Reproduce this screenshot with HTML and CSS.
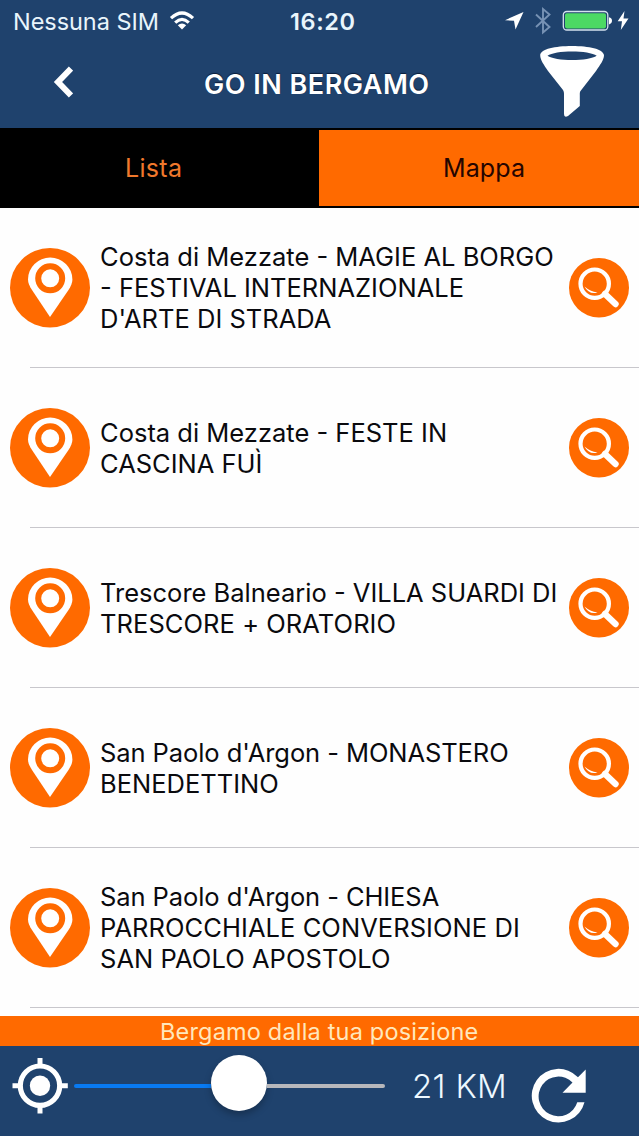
FILE: index.html
```html
<!DOCTYPE html>
<html lang="it">
<head>
<meta charset="utf-8">
<title>Go in Bergamo</title>
<link rel="stylesheet" href="styles.css">
</head>
<body>
<svg width="0" height="0" class="sprite">
  <symbol id="pin" viewBox="0 0 80 80">
    <ellipse cx="40" cy="39.7" rx="40" ry="39.7" fill="#ff6a00"/>
    <path d="M40 69L22 42C19.500 38 18 35 18 31.500A22.200 22 0 0 1 62.400 31.500C62.400 35 61 38 58.500 42Z" fill="#fff"/>
    <circle cx="40.200" cy="30.300" r="12" fill="#fff" stroke="#ff6a00" stroke-width="6"/>
  </symbol>
  <symbol id="search" viewBox="0 0 60 60">
    <ellipse cx="30" cy="29.700" rx="30" ry="29.700" fill="#ff6a00"/>
    <circle cx="25.700" cy="25.700" r="14.200" fill="none" stroke="#fff" stroke-width="4.200"/>
    <path d="M15.500 28.500Q21 33.500 28.500 34.500Q20 37 15.500 28.500Z" fill="#fff"/>
    <path d="M36 36L46.500 46" stroke="#fff" stroke-width="6.400" stroke-linecap="round"/>
  </symbol>
</svg>
<div class="screen">
  <header class="top">
    <div class="status">
      <span class="carrier">Nessuna SIM</span>
      <svg class="wifi" viewBox="0 0 26 20"><g fill="none" stroke="#fff" stroke-width="3.200"><path d="M2 7.200Q13 -3.200 24 7.200"/><path d="M6.200 11.600Q13 5.200 19.800 11.600"/></g><path d="M8.800 14.200Q13 10.800 17.200 14.200L13 18.600Z" fill="#fff"/></svg>
      <span class="clock">16:20</span>
      <svg class="indicators" viewBox="500 0 139 42">
        <path d="M505 20.200L523.500 12L515.500 29.500L514 20.800Z" fill="#fff"/>
        <path d="M536 14.500L549.500 27L543 32.500V9L549.500 14.500L536 27" fill="none" stroke="#7792b4" stroke-width="1.900"/>
        <rect x="563.300" y="11.500" width="44.500" height="18.500" rx="3.500" fill="none" stroke="#d5e2ee" stroke-width="1.300"/>
        <rect x="565" y="13.200" width="41" height="15.200" rx="1.800" fill="#4cd964"/>
        <path d="M609 17.200Q612 18 612 20.800T609 24.400Z" fill="#fff"/>
        <path d="M624.500 11L617.700 21.300H622L620.800 30L628.500 18.500H623.500Z" fill="#fff"/>
      </svg>
    </div>
    <div class="nav">
      <svg class="back" viewBox="0 0 20 32"><path d="M18 2.500L5 16L18 29.500" fill="none" stroke="#fff" stroke-width="6"/></svg>
      <h1 class="title">GO IN BERGAMO</h1>
      <svg class="filter" viewBox="540 46 64 72"><path d="M540.200 55C541 49 555 46 572 46S603 49 604 55C604 60 600 65 596 71L580.500 91C579.800 92 579.800 93 579.800 95V106L568 116Q564 118 564 114V95C564 93 564 92 563 90L548 71C544 65 540.200 60 540.200 55Z" fill="#fff"/><path d="M547.500 55.800C555 50 589 50 596.700 55.800C589 61.500 555 61.500 547.500 55.800Z" fill="#1f426d"/></svg>
    </div>
  </header>
  <nav class="tabs">
    <div class="tab tab-dark"><span>Lista</span></div>
    <div class="tab tab-orange"><span>Mappa</span></div>
  </nav>
  <main class="list">
    <article class="row"><svg class="pin"><use href="#pin"/></svg><p class="name"><span>Costa di Mezzate - MAGIE AL BORGO</span><span>- FESTIVAL INTERNAZIONALE</span><span>D'ARTE DI STRADA</span></p><svg class="search"><use href="#search"/></svg></article>
    <article class="row"><svg class="pin"><use href="#pin"/></svg><p class="name"><span>Costa di Mezzate - FESTE IN</span><span>CASCINA FUÌ</span></p><svg class="search"><use href="#search"/></svg></article>
    <article class="row"><svg class="pin"><use href="#pin"/></svg><p class="name"><span>Trescore Balneario - VILLA SUARDI DI</span><span class="loose">TRESCORE + ORATORIO</span></p><svg class="search"><use href="#search"/></svg></article>
    <article class="row"><svg class="pin"><use href="#pin"/></svg><p class="name"><span class="tight">San Paolo d'Argon - MONASTERO</span><span>BENEDETTINO</span></p><svg class="search"><use href="#search"/></svg></article>
    <article class="row"><svg class="pin"><use href="#pin"/></svg><p class="name"><span class="tight">San Paolo d'Argon - CHIESA</span><span class="loose">PARROCCHIALE CONVERSIONE DI</span><span class="loose">SAN PAOLO APOSTOLO</span></p><svg class="search"><use href="#search"/></svg></article>
  </main>
  <div class="banner"><span>Bergamo dalla tua posizione</span></div>
  <footer class="controls">
    <svg class="locate" viewBox="12 1058 56 56"><circle cx="40" cy="1085.700" r="19.700" fill="none" stroke="#fff" stroke-width="5.200"/><circle cx="40" cy="1085.700" r="10.200" fill="#fff"/><path d="M40 1058V1066M40 1105.500V1113.500M12.500 1085.700H20M60 1085.700H67.800" stroke="#fff" stroke-width="5"/></svg>
    <div class="slider"><div class="fill"></div><div class="thumb"></div><div class="rest"></div></div>
    <span class="km">21 KM</span>
    <svg class="refresh" viewBox="531 1068 56 56"><path d="M584.500 1102.300A26.800 26.800 0 1 1 578 1077.200L585.700 1069.500V1092.700H562.500L572.500 1082.500A19.800 19.800 0 1 0 577.300 1102.300Z" fill="#fff"/></svg>
  </footer>
</div>
</body>
</html>
```
FILE: styles.css
```css
* { box-sizing: border-box; }
body { margin: 0; font-family: Inter, "Liberation Sans", sans-serif; }
.sprite { position: absolute; }
svg { display: block; flex: none; }
span { white-space: nowrap; }
.screen { width: 639px; height: 1136px; display: flex; flex-direction: column; overflow: hidden; background: #fefefe; }
.top { height: 128px; flex: none; background: #1f426d; color: #fff; }
.status { height: 42px; display: flex; align-items: center; padding-left: 13px; font-size: 23.5px; color: #e9f5fc; }
.carrier { width: 156px; letter-spacing: -0.05px; }
.wifi { width: 26px; height: 20px; }
.clock { width: 80px; margin-left: 95px; font-weight: 600; letter-spacing: 0.6px; }
.indicators { width: 139px; height: 42px; margin-left: auto; }
.nav { height: 86px; display: flex; align-items: flex-start; padding-left: 53px; }
.back { width: 20px; height: 32px; margin-top: 23.5px; margin-right: 131px; }
.title { margin: 27px 0 0; width: 336px; font-size: 27px; line-height: 32px; font-weight: 600; letter-spacing: 0.5px; white-space: nowrap; text-shadow: 0 -1px 1px #0a1c38; }
.filter { width: 64px; height: 72px; margin-top: 4px; }
.tabs { height: 80px; flex: none; display: flex; background: #000; padding: 2px 0; }
.tab { display: flex; align-items: center; font-size: 25px; }
.tab-dark { width: 319px; padding-left: 125px; color: #f0782c; letter-spacing: 0.3px; }
.tab-orange { flex: 1; padding-left: 124px; background: #ff6a00; color: #250500; letter-spacing: 0.1px; }
.list { height: 808px; flex: none; overflow: hidden; }
.row { height: 160px; display: flex; align-items: center; padding: 0 10px; background: linear-gradient(#c8c7cc, #c8c7cc) 30px 159px / 609px 1px no-repeat; }
.pin { width: 80px; height: 80px; margin-right: 10px; }
.name { flex: 1; margin: 0; padding-bottom: 1px; font-size: 25.5px; line-height: 31px; color: #0a0a0e; }
.name span { display: block; width: max-content; }
.name .loose { letter-spacing: 0.06px; }
.name .tight { letter-spacing: -0.08px; }
.search { width: 60px; height: 60px; }
.banner { height: 30px; flex: none; padding-left: 160px; background: #ff6a00; color: #ffe7bc; font-size: 23.5px; line-height: 31px; letter-spacing: 0.18px; }
.controls { height: 90px; display: flex; align-items: flex-start; padding-left: 12px; background: #1f426d; color: #edf8ff; }
.locate { width: 56px; height: 56px; margin-top: 12px; }
.slider { width: 311px; height: 79px; margin-left: 6px; display: flex; align-items: center; }
.fill { width: 137px; height: 4px; border-radius: 2px 0 0 2px; background: #087af2; }
.thumb { width: 56px; height: 56px; margin-top: -5px; border-radius: 50%; background: #fff; box-shadow: 0 4px 7px rgba(0,0,0,.25); }
.rest { flex: 1; height: 4px; border-radius: 0 2px 2px 0; background: #b7b7bb; }
.km { width: 119px; margin: 20px 0 0 27px; font-size: 33px; line-height: 40px; font-weight: 300; letter-spacing: 0.3px; }
.refresh { width: 56px; height: 56px; margin-top: 22px; }
```
